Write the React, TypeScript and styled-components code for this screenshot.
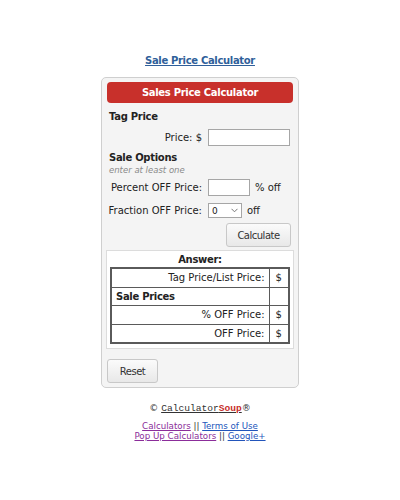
import styled, { createGlobalStyle } from "styled-components";

const GlobalStyle = createGlobalStyle`
  body {
    margin: 0;
    background: #ffffff;
    font-family: "DejaVu Sans", Verdana, sans-serif;
    color: #222;
  }
`;

const Page = styled.div`
  width: 400px;
  display: flex;
  flex-direction: column;
  align-items: center;
  padding-top: 55px;
`;

const PageTitle = styled.a`
  font-size: 10px;
  line-height: 12px;
  font-weight: bold;
  letter-spacing: -0.33px;
  color: #2f5f9a;
  text-decoration: underline;
  margin-bottom: 10px;
`;

const Panel = styled.div`
  width: 186px;
  background: #f4f4f4;
  border: 1px solid #cfcfcf;
  border-radius: 5px;
  padding: 4px 5px 4px 5px;
`;

const Header = styled.div`
  height: 21px;
  background: #c8302b;
  border-radius: 4px;
  color: #fff;
  font-weight: bold;
  font-size: 10px;
  letter-spacing: -0.3px;
  display: flex;
  align-items: center;
  justify-content: center;
`;

const Section = styled.div<{ top: number }>`
  font-weight: bold;
  font-size: 10px;
  line-height: 12px;
  letter-spacing: -0.3px;
  padding-left: 2px;
  margin-top: ${(p) => p.top}px;
`;

const Hint = styled.div`
  font-style: italic;
  font-size: 8.5px;
  line-height: 11px;
  color: #8a8a8a;
  padding-left: 2px;
  margin-top: 1px;
`;

const Row = styled.div<{ top: number }>`
  display: flex;
  align-items: center;
  font-size: 10px;
  margin-top: ${(p) => p.top}px;
`;

const Label = styled.span`
  width: 95px;
  text-align: right;
  margin-right: 6px;
  white-space: nowrap;
`;

const Unit = styled.span`
  margin-left: 5px;
`;

const Input = styled.input<{ w: number }>`
  width: ${(p) => p.w}px;
  height: 17px;
  box-sizing: border-box;
  border: 1px solid #a6a6a6;
  background: #fff;
  padding: 0 2px;
  font-size: 10px;
`;

const SelectWrap = styled.div`
  position: relative;
  width: 34px;
  height: 15px;
`;

const Select = styled.select`
  appearance: none;
  width: 34px;
  height: 15px;
  box-sizing: border-box;
  border: 1px solid #a6a6a6;
  background: #fff;
  font-size: 9px;
  font-family: "DejaVu Sans", sans-serif;
  padding: 0 0 0 3px;
  color: #222;
`;

const Chevron = styled.svg`
  position: absolute;
  right: 4px;
  top: 5px;
  pointer-events: none;
`;

const Button = styled.button<{ w: number }>`
  width: ${(p) => p.w}px;
  height: 24px;
  border: 1px solid #c8c8c8;
  border-radius: 3px;
  background: linear-gradient(#fbfbfb, #e8e8e8);
  font-size: 10px;
  font-family: "DejaVu Sans", sans-serif;
  letter-spacing: -0.5px;
  color: #333;
  padding: 0;
`;

const ButtonRow = styled.div<{ justify: string; top: number }>`
  display: flex;
  justify-content: ${(p) => p.justify};
  margin-top: ${(p) => p.top}px;
  padding-right: 2px;
`;

const AnswerBox = styled.div`
  margin: 3px -1px 0 -1px;
  background: #fff;
  border: 1px solid #dcdcdc;
  padding: 2px 3px 4px 3px;
`;

const AnswerTitle = styled.div`
  text-align: center;
  font-weight: bold;
  font-size: 10px;
  line-height: 14px;
  letter-spacing: -0.3px;
`;

const Table = styled.table`
  width: 100%;
  border-collapse: collapse;
  border: 2px solid #5a5a5a;
  font-size: 10px;
`;

const Cell = styled.td<{ align: string; bold?: boolean }>`
  border: 1px solid #5a5a5a;
  height: 17.5px;
  padding: 0 4px;
  text-align: ${(p) => p.align};
  font-weight: ${(p) => (p.bold ? "bold" : "normal")};
  letter-spacing: ${(p) => (p.bold ? "-0.3px" : "0")};
`;

const ValueCell = styled(Cell)`
  width: 20px;
  padding: 0;
  box-sizing: border-box;
`;

const Footer = styled.div`
  margin-top: 14px;
  display: flex;
  flex-direction: column;
  align-items: center;
`;

const Copy = styled.div`
  font-size: 9px;
  line-height: 12px;
  color: #333;
  margin-bottom: 6px;
`;

const Brand = styled.span`
  font-family: "Liberation Mono", monospace;
  font-size: 9.6px;
  text-decoration: underline;
  color: #333;
`;

const Soup = styled.span`
  color: #c8302b;
  font-weight: bold;
`;

const LinkLine = styled.div`
  font-size: 8.7px;
  line-height: 10px;
  color: #333;
`;

const FootLink = styled.a<{ visited?: boolean }>`
  color: ${(p) => (p.visited ? "#8b2d9a" : "#2255bb")};
  text-decoration: underline;
`;

export default function App() {
  return (
    <>
      <GlobalStyle />
      <Page>
        <PageTitle>Sale Price Calculator</PageTitle>
        <Panel>
          <Header>Sales Price Calculator</Header>
          <Section top={8}>Tag Price</Section>
          <Row top={6}>
            <Label>Price: $</Label>
            <Input w={82} />
          </Row>
          <Section top={6}>Sale Options</Section>
          <Hint>enter at least one</Hint>
          <Row top={3}>
            <Label>Percent OFF Price:</Label>
            <Input w={42} />
            <Unit>% off</Unit>
          </Row>
          <Row top={7}>
            <Label>Fraction OFF Price:</Label>
            <SelectWrap>
              <Select defaultValue="0">
                <option>0</option>
              </Select>
              <Chevron width="7" height="5" viewBox="0 0 7 5">
                <path d="M0.5 0.8 L3.5 3.8 L6.5 0.8" fill="none" stroke="#777" strokeWidth="1" />
              </Chevron>
            </SelectWrap>
            <Unit>off</Unit>
          </Row>
          <ButtonRow justify="flex-end" top={5}>
            <Button w={65}>Calculate</Button>
          </ButtonRow>
          <AnswerBox>
            <AnswerTitle>Answer:</AnswerTitle>
            <Table>
              <tbody>
                <tr>
                  <Cell align="right">Tag Price/List Price:</Cell>
                  <ValueCell align="center">$</ValueCell>
                </tr>
                <tr>
                  <Cell align="left" bold>Sale Prices</Cell>
                  <ValueCell align="center"></ValueCell>
                </tr>
                <tr>
                  <Cell align="right">% OFF Price:</Cell>
                  <ValueCell align="center">$</ValueCell>
                </tr>
                <tr>
                  <Cell align="right">OFF Price:</Cell>
                  <ValueCell align="center">$</ValueCell>
                </tr>
              </tbody>
            </Table>
          </AnswerBox>
          <ButtonRow justify="flex-start" top={10}>
            <Button w={51}>Reset</Button>
          </ButtonRow>
        </Panel>
        <Footer>
          <Copy>
            © <Brand>Calculator<Soup>Soup</Soup></Brand>®
          </Copy>
          <LinkLine>
            <FootLink visited>Calculators</FootLink> || <FootLink>Terms of Use</FootLink>
          </LinkLine>
          <LinkLine>
            <FootLink visited>Pop Up Calculators</FootLink> || <FootLink>Google+</FootLink>
          </LinkLine>
        </Footer>
      </Page>
    </>
  );
}
